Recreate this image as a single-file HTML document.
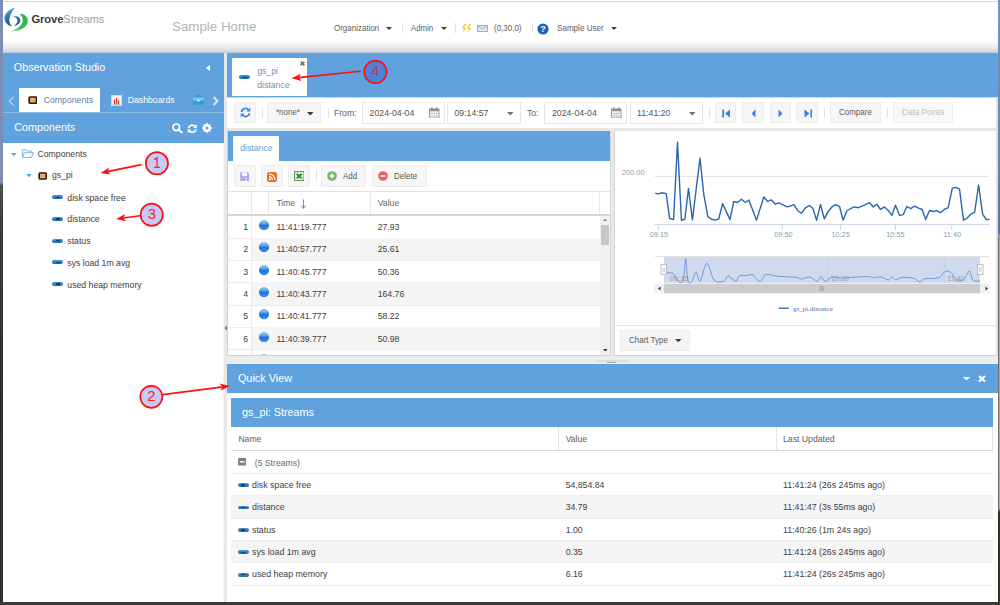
<!DOCTYPE html>
<html><head><meta charset="utf-8">
<style>
*{box-sizing:border-box;margin:0;padding:0}
html,body{width:1000px;height:605px;overflow:hidden;background:#2b2e28;font-family:"Liberation Sans",sans-serif}
.a{position:absolute}
.t{position:absolute;white-space:nowrap;line-height:1}
.blue{background:#5fa2dd}
</style></head><body>
<!-- edges -->
<div class="a" style="left:0;top:0;width:3px;height:605px;background:linear-gradient(#7c8eb6 0,#7c8eb6 182px,#4a4e44 186px,#3a3c35 230px,#2e302b 400px,#30322d 605px)"></div>
<div class="a" style="left:997.5px;top:0;width:2.5px;height:605px;background:linear-gradient(#7294be 0,#6a88b0 150px,#5a7296 232px,#a4a4a4 237px,#acacac 508px,#30322c 512px,#2e302b 605px)"></div><div class="a" style="left:997.5px;top:237px;width:1px;height:273px;background:#707070"></div>
<div class="a" style="left:0;top:602px;width:1000px;height:3px;background:#3a3b36"></div>
<div class="a" style="left:3px;top:0;width:995px;height:602px;background:#fff"></div>

<!-- ===== HEADER ===== -->
<div class="a" style="left:3px;top:0;width:995px;height:53px;background:linear-gradient(#fff 0,#fff 41px,#f0f1f4 45.5px,#dcdfe6 50px,#c4c8d5 53px)"></div>
<div class="a" style="left:3px;top:1px;width:995px;height:1px;background:#d6d6d6"></div>
<svg class="a" style="left:2px;top:5px" width="30" height="30" viewBox="0 0 30 30">
 <defs><linearGradient id="lgb" x1="0.3" y1="0" x2="0.6" y2="1"><stop offset="0" stop-color="#6aa8dc"/><stop offset="0.5" stop-color="#2e70b4"/><stop offset="1" stop-color="#1a5696"/></linearGradient>
 <linearGradient id="lgg" x1="0.8" y1="0.2" x2="0.1" y2="1"><stop offset="0" stop-color="#2fb84a"/><stop offset="0.6" stop-color="#3cbf55"/><stop offset="1" stop-color="#a8e0b0"/></linearGradient></defs>
 <path d="M12.9,2.7 C6,4.5 1.5,10 2.7,14.5 C3.5,18.5 6.5,20.8 9.9,21.3 C7.5,19 6.8,15.5 7.7,12.6 C8.5,9 10.5,5.5 12.9,2.7Z" fill="url(#lgb)"/>
 <path d="M11.2,11.6 C14,10.4 18.2,12 18.4,15 C18.6,18.2 15.6,20.4 12.2,20.9 C14.5,19 15.6,17 15.3,15.1 C15,13.2 13.5,12 11.2,11.6Z" fill="#2c6cb0"/>
 <path d="M17.4,8.7 C22.5,8.5 26.2,12 25.9,16.2 C25.5,21.5 19.5,26.3 7.9,26.6 C14,24.6 19.6,21 20.6,16.5 C21.2,13.5 19.8,10.6 17.4,8.7Z" fill="url(#lgg)"/>
</svg>
<div class="t" style="left:31.5px;top:14px;font-size:11.2px;color:#383838;font-weight:bold;letter-spacing:-0.1px">Grove<span style="font-weight:normal;color:#9c9c9c">Streams</span></div>
<div class="t" style="left:172px;top:20px;font-size:13.33px;color:#b3b3b3">Sample Home</div>
<div class="t" style="left:333.5px;top:24px;font-size:8.9px;transform:scaleX(0.9);transform-origin:0 0;color:#5e5e5e">Organization</div>
<svg class="a" style="left:385.0px;top:26.0px" width="8.00" height="5.00" viewBox="0 0 8.00 5.00"><path d="M1,1 H7.00 L4.00,4.00Z" fill="#3d3d3d"/></svg>
<div class="a" style="left:401.5px;top:23px;width:1px;height:10px;background:#e2e2e2"></div>
<div class="t" style="left:410.8px;top:24px;font-size:8.9px;transform:scaleX(0.88);transform-origin:0 0;color:#5e5e5e">Admin</div>
<svg class="a" style="left:439.5px;top:26.0px" width="8.00" height="5.00" viewBox="0 0 8.00 5.00"><path d="M1,1 H7.00 L4.00,4.00Z" fill="#3d3d3d"/></svg>
<div class="a" style="left:455px;top:23px;width:1px;height:10px;background:#e2e2e2"></div>
<svg class="a" style="left:461px;top:24px" width="11" height="9" viewBox="0 0 11 9"><path d="M3.5 0 L1 4.5 L3 4.5 L1.5 9 L5 4 L3 4 L5 0Z M8.5 0 L6 4.5 L8 4.5 L6.5 9 L10 4 L8 4 L10 0Z" fill="#f6c21c"/></svg>
<svg class="a" style="left:477px;top:25px" width="11" height="7" viewBox="0 0 11 7"><rect x="0.5" y="0.5" width="10" height="6" fill="#dfeaf7" stroke="#8fb1da"/><path d="M0.5 0.5 L5.5 4 L10.5 0.5" fill="none" stroke="#8fb1da"/></svg>
<div class="t" style="left:494px;top:24px;font-size:8.9px;transform:scaleX(0.9);transform-origin:0 0;color:#5e5e5e">(0,30,0)</div>
<div class="a" style="left:531.5px;top:23px;width:1px;height:10px;background:#e2e2e2"></div>
<svg class="a" style="left:537px;top:22.5px" width="12" height="12" viewBox="0 0 12 12"><circle cx="6" cy="6" r="5.6" fill="#1f5fc4"/><text x="6" y="9.3" font-size="9" font-weight="bold" text-anchor="middle" fill="#fff" font-family="Liberation Sans">?</text></svg>
<div class="t" style="left:557px;top:24px;font-size:8.9px;transform:scaleX(0.91);transform-origin:0 0;color:#5e5e5e">Sample User</div>
<svg class="a" style="left:610.0px;top:26.0px" width="8.00" height="5.00" viewBox="0 0 8.00 5.00"><path d="M1,1 H7.00 L4.00,4.00Z" fill="#3d3d3d"/></svg>

<!-- ===== LEFT PANEL ===== -->
<div class="a blue" style="left:3px;top:53px;width:220.5px;height:90px"></div>
<div class="t" style="left:13.8px;top:62px;font-size:10.76px;color:#fff">Observation Studio</div>
<div class="a" style="left:205.8px;top:64.5px;width:0;height:0;border-top:3.5px solid transparent;border-bottom:3.5px solid transparent;border-right:4px solid #fff"></div>
<svg class="a" style="left:8px;top:95.5px" width="7" height="10" viewBox="0 0 7 10"><path d="M5.5 0.8 L1.5 5 L5.5 9.2" fill="none" stroke="#a9cdef" stroke-width="1.6"/></svg>
<div class="a" style="left:18.8px;top:88px;width:81.7px;height:24.5px;background:#fff"></div>
<svg class="a" style="left:27.8px;top:96.0px" width="9.6" height="8.2" viewBox="0 0 9.6 8.2"><rect x="0.3" y="0.2" width="9.0" height="7.799999999999999" rx="1.7" fill="#1a1a1a"/><rect x="2.0" y="1.7" width="5.6" height="4.799999999999999" fill="#f7a94e"/><g fill="#fff" opacity="0.55"><rect x="0" y="2.46" width="0.8" height="0.6"/><rect x="0" y="5.08" width="0.8" height="0.6"/><rect x="8.799999999999999" y="2.46" width="0.8" height="0.6"/><rect x="8.799999999999999" y="5.08" width="0.8" height="0.6"/></g></svg>
<div class="t" style="left:43.7px;top:96px;font-size:8.71px;color:#5c83ad">Components</div>
<svg class="a" style="left:111px;top:94.8px" width="11.3" height="11" viewBox="0 0 11.3 11"><rect x="0.5" y="0.5" width="10.3" height="10" fill="#f4f4f4" stroke="#d8d8d8"/><rect x="3" y="4.5" width="1.2" height="4.5" fill="#e0322a"/><rect x="5" y="3" width="1.2" height="6" fill="#e0322a"/><rect x="7" y="5.5" width="1.2" height="3.5" fill="#e0322a"/><rect x="2" y="9" width="7.5" height="0.6" fill="#888"/></svg>
<div class="t" style="left:127.7px;top:96px;font-size:8.71px;color:#fff">Dashboards</div>
<svg class="a" style="left:193px;top:94.8px" width="11" height="10" viewBox="0 0 11 10"><path d="M3.5 2.5 V1 H7.5 V2.5" fill="none" stroke="#2b88c8" stroke-width="1"/><rect x="0.3" y="2.5" width="10.4" height="7.2" rx="1" fill="#2aa0dc"/><rect x="0.3" y="2.5" width="10.4" height="3" fill="#7cc8ee"/><rect x="4.5" y="4.8" width="2" height="1.6" fill="#fff"/></svg>
<svg class="a" style="left:212px;top:95.5px" width="7" height="10" viewBox="0 0 7 10"><path d="M1.6 0.9 L5.4 5 L1.6 9.1" fill="none" stroke="#d6e8fa" stroke-width="2"/></svg>
<div class="a" style="left:3px;top:112.3px;width:220.5px;height:1px;background:#8dbce6"></div>
<div class="t" style="left:14.3px;top:122px;font-size:10.76px;color:#fff">Components</div>
<svg class="a" style="left:171.5px;top:123.4px" width="11" height="10" viewBox="0 0 11 10"><circle cx="4.3" cy="4.3" r="3.3" fill="none" stroke="#fff" stroke-width="1.7"/><path d="M6.8 6.8 L9.8 9.5" stroke="#fff" stroke-width="2" stroke-linecap="round"/></svg>
<svg class="a" style="left:186.8px;top:123.8px" width="10.5" height="9.5" viewBox="0 0 10.5 9.5"><path d="M1.6 4.2 A3.7 3.7 0 0 1 8.2 2.6" fill="none" stroke="#fff" stroke-width="1.7"/><path d="M9.8 0.3 V4 H6.2Z" fill="#fff"/><path d="M8.9 5.3 A3.7 3.7 0 0 1 2.3 6.9" fill="none" stroke="#fff" stroke-width="1.7"/><path d="M0.7 9.2 V5.5 H4.3Z" fill="#fff"/></svg>
<svg class="a" style="left:201.6px;top:123.2px" width="10" height="10" viewBox="0 0 10 10"><g fill="#fff"><circle cx="5" cy="5" r="3.7"/><rect x="4.1" y="0.2" width="1.8" height="2.2" transform="rotate(0 5 5)"/><rect x="4.1" y="0.2" width="1.8" height="2.2" transform="rotate(45 5 5)"/><rect x="4.1" y="0.2" width="1.8" height="2.2" transform="rotate(90 5 5)"/><rect x="4.1" y="0.2" width="1.8" height="2.2" transform="rotate(135 5 5)"/><rect x="4.1" y="0.2" width="1.8" height="2.2" transform="rotate(180 5 5)"/><rect x="4.1" y="0.2" width="1.8" height="2.2" transform="rotate(225 5 5)"/><rect x="4.1" y="0.2" width="1.8" height="2.2" transform="rotate(270 5 5)"/><rect x="4.1" y="0.2" width="1.8" height="2.2" transform="rotate(315 5 5)"/></g><circle cx="5" cy="5" r="1.5" fill="#5fa2dd"/></svg>

<!-- tree -->
<svg class="a" style="left:10.0px;top:151.7px" width="7.60" height="5.20" viewBox="0 0 7.60 5.20"><path d="M1,1 H6.60 L3.80,4.20Z" fill="#5fa2dd"/></svg>
<svg class="a" style="left:22px;top:149.3px" width="12" height="9" viewBox="0 0 12 9"><path d="M0.6 8.4 V0.8 H4 L5 2 H9.5 V3.5 M0.6 8.4 L2.5 3.6 H11.4 L9.5 8.4 Z" fill="none" stroke="#7fb6e6" stroke-width="1"/></svg>
<div class="t" style="left:37.5px;top:150px;font-size:8.7px;color:#404040">Components</div>
<svg class="a" style="left:24.8px;top:173.4px" width="7.80" height="5.20" viewBox="0 0 7.80 5.20"><path d="M1,1 H6.80 L3.90,4.20Z" fill="#5fa2dd"/></svg>
<svg class="a" style="left:38.0px;top:171.7px" width="9.4" height="8.0" viewBox="0 0 9.4 8.0"><rect x="0.3" y="0.2" width="8.8" height="7.6" rx="1.7" fill="#1a1a1a"/><rect x="2.0" y="1.7" width="5.4" height="4.6" fill="#f7a94e"/><g fill="#fff" opacity="0.55"><rect x="0" y="2.40" width="0.8" height="0.6"/><rect x="0" y="4.96" width="0.8" height="0.6"/><rect x="8.6" y="2.40" width="0.8" height="0.6"/><rect x="8.6" y="4.96" width="0.8" height="0.6"/></g></svg>
<div class="t" style="left:52px;top:171px;font-size:8.7px;color:#404040">gs_pi</div>
<div class="a" style="left:52px;top:195.3px;width:11px;height:4px;border-radius:2px;background:linear-gradient(#4a95d3,#1f6aa8)"></div><div class="a" style="left:55.5px;top:196.5px;width:4px;height:1.6px;background:#123d63"></div>
<div class="t" style="left:67.3px;top:194px;font-size:8.7px;color:#404040">disk space free</div>
<div class="a" style="left:52px;top:217.0px;width:11px;height:4px;border-radius:2px;background:linear-gradient(#4a95d3,#1f6aa8)"></div><div class="a" style="left:55.5px;top:218.2px;width:4px;height:1.6px;background:#123d63"></div>
<div class="t" style="left:67.3px;top:215px;font-size:8.7px;color:#404040">distance</div>
<div class="a" style="left:52px;top:238.7px;width:11px;height:4px;border-radius:2px;background:linear-gradient(#4a95d3,#1f6aa8)"></div><div class="a" style="left:55.5px;top:239.9px;width:4px;height:1.6px;background:#123d63"></div>
<div class="t" style="left:67.3px;top:237px;font-size:8.7px;color:#404040">status</div>
<div class="a" style="left:52px;top:260.4px;width:11px;height:4px;border-radius:2px;background:linear-gradient(#4a95d3,#1f6aa8)"></div><div class="a" style="left:55.5px;top:261.6px;width:4px;height:1.6px;background:#123d63"></div>
<div class="t" style="left:67.3px;top:259px;font-size:8.7px;color:#404040">sys load 1m avg</div>
<div class="a" style="left:52px;top:282.1px;width:11px;height:4px;border-radius:2px;background:linear-gradient(#4a95d3,#1f6aa8)"></div><div class="a" style="left:55.5px;top:283.3px;width:4px;height:1.6px;background:#123d63"></div>
<div class="t" style="left:67.3px;top:281px;font-size:8.7px;color:#404040">used heap memory</div>
<!-- ===== MAIN ===== -->
<div class="a" style="left:224px;top:53px;width:3px;height:549px;background:#e8e8e8"></div><div class="a" style="left:223px;top:143px;width:1px;height:459px;background:#f2f2f2"></div>
<div class="a blue" style="left:227px;top:53px;width:771px;height:43.5px"></div>
<div class="a" style="left:231.6px;top:57.8px;width:75.4px;height:38.7px;background:#fff"></div>
<svg class="a" style="left:299.5px;top:61.2px" width="5" height="5" viewBox="0 0 5 5"><path d="M0.6 0.6 L4.4 4.4 M4.4 0.6 L0.6 4.4" stroke="#707070" stroke-width="1.5"/></svg>
<div class="a" style="left:239.2px;top:75.3px;width:10.7px;height:3.8px;border-radius:2px;background:linear-gradient(#4a95d3,#1f6aa8)"></div><div class="a" style="left:242.5px;top:76.5px;width:4px;height:1.5px;background:#15416a"></div>
<div class="t" style="left:257.2px;top:67px;font-size:8.7px;color:#6a93c2;">gs_pi</div>
<div class="t" style="left:257.2px;top:81px;font-size:8.7px;color:#6a93c2;">distance</div>
<div class="a" style="left:227px;top:96.5px;width:771px;height:1px;background:#d9d9d9"></div>
<div class="a" style="left:227px;top:97.5px;width:768.5px;height:30px;background:#fff"></div>
<div class="a" style="left:995.5px;top:97.5px;width:2.5px;height:30px;background:#e4e4e4"></div>
<div class="a" style="left:234.4px;top:102px;width:21.299999999999983px;height:21px;background:#f6f6f6;border:1px solid #eeeeee"></div>
<svg class="a" style="left:239.5px;top:107px" width="11" height="11" viewBox="0 0 11 11"><path d="M1.5 5 A4 4 0 0 1 8.6 3" fill="none" stroke="#3d8de0" stroke-width="1.8"/><path d="M10.3 0.6 V4.6 H6.3Z" fill="#3d8de0"/><path d="M9.5 6 A4 4 0 0 1 2.4 8" fill="none" stroke="#3d8de0" stroke-width="1.8"/><path d="M0.7 10.4 V6.4 H4.7Z" fill="#3d8de0"/></svg>
<div class="a" style="left:261.6px;top:108px;width:1px;height:10px;background:#e0e0e0"></div>
<div class="a" style="left:267.4px;top:102px;width:53.60000000000002px;height:21px;background:#f6f6f6;border:1px solid #eeeeee"></div>
<div class="t" style="left:276px;top:108px;font-size:8.9px;transform:scaleX(0.9);transform-origin:0 0;color:#606060">*none*</div>
<svg class="a" style="left:306.0px;top:110.5px" width="8.60" height="5.50" viewBox="0 0 8.60 5.50"><path d="M1,1 H7.60 L4.30,4.50Z" fill="#3a3a3a"/></svg>
<div class="a" style="left:327.6px;top:108px;width:1px;height:10px;background:#e0e0e0"></div>
<div class="t" style="left:334px;top:109px;font-size:8.6px;color:#606060;">From:</div>
<div class="a" style="left:362.4px;top:101.6px;width:82.60000000000002px;height:22px;background:#fff;border:1px solid #e6e6e6"></div>
<div class="t" style="left:369.6px;top:109px;font-size:8.76px;color:#555;">2024-04-04</div>
<svg class="a" style="left:429px;top:106.5px" width="10.5" height="11.5" viewBox="0 0 10.5 11.5"><rect x="0.5" y="2" width="9.5" height="9" fill="none" stroke="#9a9a9a" stroke-width="1"/><rect x="0.5" y="2" width="9.5" height="2.2" fill="#8e8e8e"/><path d="M0.5 6.5 H10 M0.5 9 H10 M2.9 4 V11 M5.25 4 V11 M7.6 4 V11" stroke="#bdbdbd" stroke-width="0.7"/><rect x="2.2" y="0.3" width="1.4" height="2.5" fill="#8e8e8e"/><rect x="6.9" y="0.3" width="1.4" height="2.5" fill="#8e8e8e"/></svg>
<div class="a" style="left:447.4px;top:101.6px;width:73.60000000000002px;height:22px;background:#fff;border:1px solid #e6e6e6"></div>
<div class="t" style="left:454.4px;top:109px;font-size:8.76px;color:#555;">09:14:57</div>
<svg class="a" style="left:506.0px;top:110.8px" width="8.60" height="5.50" viewBox="0 0 8.60 5.50"><path d="M1,1 H7.60 L4.30,4.50Z" fill="#707070"/></svg>
<div class="t" style="left:527px;top:109px;font-size:8.6px;color:#606060;">To:</div>
<div class="a" style="left:544.4px;top:101.6px;width:83.0px;height:22px;background:#fff;border:1px solid #e6e6e6"></div>
<div class="t" style="left:552px;top:109px;font-size:8.76px;color:#555;">2024-04-04</div>
<svg class="a" style="left:611px;top:106.5px" width="10.5" height="11.5" viewBox="0 0 10.5 11.5"><rect x="0.5" y="2" width="9.5" height="9" fill="none" stroke="#9a9a9a" stroke-width="1"/><rect x="0.5" y="2" width="9.5" height="2.2" fill="#8e8e8e"/><path d="M0.5 6.5 H10 M0.5 9 H10 M2.9 4 V11 M5.25 4 V11 M7.6 4 V11" stroke="#bdbdbd" stroke-width="0.7"/><rect x="2.2" y="0.3" width="1.4" height="2.5" fill="#8e8e8e"/><rect x="6.9" y="0.3" width="1.4" height="2.5" fill="#8e8e8e"/></svg>
<div class="a" style="left:629.6px;top:101.6px;width:73.79999999999995px;height:22px;background:#fff;border:1px solid #e6e6e6"></div>
<div class="t" style="left:637px;top:109px;font-size:8.76px;color:#555;">11:41:20</div>
<svg class="a" style="left:688.0px;top:110.8px" width="8.60" height="5.50" viewBox="0 0 8.60 5.50"><path d="M1,1 H7.60 L4.30,4.50Z" fill="#707070"/></svg>
<div class="a" style="left:709.4px;top:108px;width:1px;height:10px;background:#e0e0e0"></div>
<div class="a" style="left:715px;top:102px;width:21.399999999999977px;height:21px;background:#f6f6f6;border:1px solid #eeeeee"></div>
<div class="a" style="left:742.4px;top:102px;width:21.399999999999977px;height:21px;background:#f6f6f6;border:1px solid #eeeeee"></div>
<div class="a" style="left:769.6px;top:102px;width:21.399999999999977px;height:21px;background:#f6f6f6;border:1px solid #eeeeee"></div>
<div class="a" style="left:796.4px;top:102px;width:21.399999999999977px;height:21px;background:#f6f6f6;border:1px solid #eeeeee"></div>
<svg class="a" style="left:722px;top:108.5px" width="8.5" height="9" viewBox="0 0 8.5 9"><rect x="0.3" y="0.5" width="1.8" height="8" fill="#3d7fe0"/><path d="M8 0.5 V8.5 L3 4.5Z" fill="#3d7fe0"/></svg>
<svg class="a" style="left:750.5px;top:108.5px" width="5" height="9" viewBox="0 0 5 9"><path d="M4.5 0.5 V8.5 L0.5 4.5Z" fill="#3d7fe0"/></svg>
<svg class="a" style="left:777.5px;top:108.5px" width="5" height="9" viewBox="0 0 5 9"><path d="M0.5 0.5 V8.5 L4.5 4.5Z" fill="#3d7fe0"/></svg>
<svg class="a" style="left:803.5px;top:108.5px" width="8.5" height="9" viewBox="0 0 8.5 9"><path d="M0.5 0.5 V8.5 L5.5 4.5Z" fill="#3d7fe0"/><rect x="6.4" y="0.5" width="1.8" height="8" fill="#3d7fe0"/></svg>
<div class="a" style="left:824.4px;top:108px;width:1px;height:10px;background:#e0e0e0"></div>
<div class="a" style="left:830px;top:102px;width:51px;height:21px;background:#f6f6f6;border:1px solid #eeeeee"></div>
<div class="t" style="left:839px;top:108px;font-size:8.9px;transform:scaleX(0.9);transform-origin:0 0;color:#5a5a5a">Compare</div>
<div class="a" style="left:887.4px;top:108px;width:1px;height:10px;background:#e0e0e0"></div>
<div class="a" style="left:893px;top:102px;width:60px;height:21px;background:#f8f8f8;border:1px solid #f0f0f0"></div>
<div class="t" style="left:901.6px;top:108px;font-size:8.9px;transform:scaleX(0.92);transform-origin:0 0;color:#bdbdbd">Data Points</div>
<div class="a" style="left:227px;top:127.5px;width:771px;height:3.5px;background:#e6e6e6"></div>
<!-- ===== GRID PANEL ===== -->
<div class="a" style="left:227px;top:131px;width:384px;height:225.00px;background:#fff;"></div>
<div class="a" style="left:227px;top:131px;width:1px;height:225.00px;background:#d0d0d0;"></div>
<div class="a" style="left:228px;top:131px;width:382.70px;height:29.80px;background:#5fa2dd;"></div>
<div class="a" style="left:233px;top:136px;width:46.40px;height:24.80px;background:#fff;"></div>
<div class="t" style="left:240.2px;top:144px;font-size:8.7px;color:#6a9acb;">distance</div>
<div class="a" style="left:234px;top:165.3px;width:21.80px;height:21.60px;background:#f6f6f6;border:1px solid #eeeeee"></div>
<svg class="a" style="left:240.3px;top:171.6px" width="9.3" height="9.4" viewBox="0 0 9.3 9.4"><path d="M0.3 0.3 H7.8 L9 1.5 V9.1 H0.3Z" fill="#a4a4ec"/><rect x="2" y="0.6" width="5.2" height="3.6" fill="#fdfdff"/><rect x="2.3" y="5.6" width="4.6" height="3.5" fill="#d6d6f2"/><rect x="3.2" y="6.4" width="1.5" height="2" fill="#6a6a9a"/></svg>
<div class="a" style="left:261.3px;top:165.3px;width:21.40px;height:21.60px;background:#f6f6f6;border:1px solid #eeeeee"></div>
<svg class="a" style="left:267px;top:171.5px" width="10" height="10" viewBox="0 0 10 10"><rect x="0" y="0" width="10" height="10" rx="1.8" fill="#e8742a"/><circle cx="2.8" cy="7.2" r="1" fill="#fff"/><path d="M2 4.6 A3.4 3.4 0 0 1 5.4 8 M2 2 A6 6 0 0 1 8 8" fill="none" stroke="#fff" stroke-width="1.2"/></svg>
<div class="a" style="left:288.2px;top:165.3px;width:21.40px;height:21.60px;background:#f6f6f6;border:1px solid #eeeeee"></div>
<svg class="a" style="left:293.6px;top:171.3px" width="10.4" height="10" viewBox="0 0 10.4 10"><rect x="0.4" y="0.4" width="9.6" height="9.2" fill="#d9ecd2" stroke="#4d8f4d" stroke-width="0.9"/><path d="M2.8 2.8 L7.6 7.4 M7.6 2.8 L2.8 7.4" stroke="#2a8a3a" stroke-width="1.8"/></svg>
<div class="a" style="left:315.7px;top:170px;width:1.00px;height:11.00px;background:#e0e0e0;"></div>
<div class="a" style="left:321.2px;top:165.3px;width:44.90px;height:21.60px;background:#f6f6f6;border:1px solid #eeeeee"></div>
<svg class="a" style="left:327.2px;top:171.2px" width="10" height="10" viewBox="0 0 10 10"><circle cx="5" cy="5" r="4.8" fill="#6dbb5c"/><rect x="4.2" y="2.6" width="1.6" height="4.8" fill="#fff"/><rect x="2.6" y="4.2" width="4.8" height="1.6" fill="#fff"/></svg>
<div class="t" style="left:343.2px;top:172px;font-size:8.9px;transform:scaleX(0.89);transform-origin:0 0;color:#5a5a5a">Add</div>
<div class="a" style="left:372.4px;top:165.3px;width:54.20px;height:21.60px;background:#f6f6f6;border:1px solid #eeeeee"></div>
<svg class="a" style="left:378.3px;top:171.2px" width="10" height="10" viewBox="0 0 10 10"><circle cx="5" cy="5" r="4.8" fill="#e66262"/><rect x="2.6" y="4.2" width="4.8" height="1.6" fill="#fff"/></svg>
<div class="t" style="left:394px;top:172px;font-size:8.9px;transform:scaleX(0.9);transform-origin:0 0;color:#5a5a5a">Delete</div>
<div class="a" style="left:228px;top:191px;width:382.3px;height:1px;background:#e4e4e4;"></div>
<div class="a" style="left:228px;top:213.6px;width:382.3px;height:2px;background:#d6d6d6;"></div>
<div class="a" style="left:251.3px;top:192px;width:1.00px;height:21.80px;background:#e8e8e8;"></div>
<div class="a" style="left:268.2px;top:192px;width:1.00px;height:21.80px;background:#e8e8e8;"></div>
<div class="a" style="left:370.3px;top:192px;width:1.00px;height:21.80px;background:#e8e8e8;"></div>
<div class="a" style="left:599.4px;top:192px;width:1.00px;height:21.80px;background:#e8e8e8;"></div>
<div class="t" style="left:276.4px;top:199px;font-size:8.5px;color:#666;">Time</div>
<svg class="a" style="left:300.8px;top:198.8px" width="5" height="10" viewBox="0 0 5 10"><path d="M2.5 0.5 V9" stroke="#888" stroke-width="1"/><path d="M0.5 6.5 L2.5 9.5 L4.5 6.5" fill="none" stroke="#888" stroke-width="1"/></svg>
<div class="t" style="left:377.7px;top:199px;font-size:8.7px;color:#666;">Value</div>
<div class="a" style="left:228px;top:237.82px;width:372.2px;height:1px;background:#ececec;"></div>
<div class="a" style="left:251.3px;top:215.5px;width:1.00px;height:22.32px;background:#ededed;"></div>
<svg class="a" style="left:259.2px;top:219.90px" width="10" height="10.5" viewBox="0 0 10 10.5"><defs><linearGradient id="gb0" x1="0" y1="0" x2="0" y2="1"><stop offset="0" stop-color="#a8d8ff"/><stop offset="0.3" stop-color="#5aa8f0"/><stop offset="0.55" stop-color="#1f70d4"/><stop offset="1" stop-color="#3f9cf0"/></linearGradient></defs><circle cx="5" cy="5.25" r="4.9" fill="url(#gb0)"/><circle cx="5" cy="5.25" r="4.6" fill="none" stroke="#1a5fb8" stroke-width="0.5" opacity="0.6"/></svg>
<div class="t" style="left:243.2px;top:223px;font-size:8.7px;color:#404040;">1</div>
<div class="t" style="left:276.4px;top:223px;font-size:8.7px;color:#404040;">11:41:19.777</div>
<div class="t" style="left:377.7px;top:223px;font-size:8.7px;color:#404040;">27.93</div>
<div class="a" style="left:251.5px;top:237.82px;width:348.70px;height:22.32px;background:#f5f5f5;"></div>
<div class="a" style="left:228px;top:260.14px;width:372.2px;height:1px;background:#ececec;"></div>
<div class="a" style="left:251.3px;top:237.82px;width:1.00px;height:22.32px;background:#ededed;"></div>
<svg class="a" style="left:259.2px;top:242.22px" width="10" height="10.5" viewBox="0 0 10 10.5"><defs><linearGradient id="gb1" x1="0" y1="0" x2="0" y2="1"><stop offset="0" stop-color="#a8d8ff"/><stop offset="0.3" stop-color="#5aa8f0"/><stop offset="0.55" stop-color="#1f70d4"/><stop offset="1" stop-color="#3f9cf0"/></linearGradient></defs><circle cx="5" cy="5.25" r="4.9" fill="url(#gb1)"/><circle cx="5" cy="5.25" r="4.6" fill="none" stroke="#1a5fb8" stroke-width="0.5" opacity="0.6"/></svg>
<div class="t" style="left:243.2px;top:245px;font-size:8.7px;color:#404040;">2</div>
<div class="t" style="left:276.4px;top:245px;font-size:8.7px;color:#404040;">11:40:57.777</div>
<div class="t" style="left:377.7px;top:245px;font-size:8.7px;color:#404040;">25.61</div>
<div class="a" style="left:228px;top:282.46px;width:372.2px;height:1px;background:#ececec;"></div>
<div class="a" style="left:251.3px;top:260.14px;width:1.00px;height:22.32px;background:#ededed;"></div>
<svg class="a" style="left:259.2px;top:264.54px" width="10" height="10.5" viewBox="0 0 10 10.5"><defs><linearGradient id="gb2" x1="0" y1="0" x2="0" y2="1"><stop offset="0" stop-color="#a8d8ff"/><stop offset="0.3" stop-color="#5aa8f0"/><stop offset="0.55" stop-color="#1f70d4"/><stop offset="1" stop-color="#3f9cf0"/></linearGradient></defs><circle cx="5" cy="5.25" r="4.9" fill="url(#gb2)"/><circle cx="5" cy="5.25" r="4.6" fill="none" stroke="#1a5fb8" stroke-width="0.5" opacity="0.6"/></svg>
<div class="t" style="left:243.2px;top:268px;font-size:8.7px;color:#404040;">3</div>
<div class="t" style="left:276.4px;top:268px;font-size:8.7px;color:#404040;">11:40:45.777</div>
<div class="t" style="left:377.7px;top:268px;font-size:8.7px;color:#404040;">50.36</div>
<div class="a" style="left:251.5px;top:282.46000000000004px;width:348.70px;height:22.32px;background:#f5f5f5;"></div>
<div class="a" style="left:228px;top:304.78px;width:372.2px;height:1px;background:#ececec;"></div>
<div class="a" style="left:251.3px;top:282.46000000000004px;width:1.00px;height:22.32px;background:#ededed;"></div>
<svg class="a" style="left:259.2px;top:286.86px" width="10" height="10.5" viewBox="0 0 10 10.5"><defs><linearGradient id="gb3" x1="0" y1="0" x2="0" y2="1"><stop offset="0" stop-color="#a8d8ff"/><stop offset="0.3" stop-color="#5aa8f0"/><stop offset="0.55" stop-color="#1f70d4"/><stop offset="1" stop-color="#3f9cf0"/></linearGradient></defs><circle cx="5" cy="5.25" r="4.9" fill="url(#gb3)"/><circle cx="5" cy="5.25" r="4.6" fill="none" stroke="#1a5fb8" stroke-width="0.5" opacity="0.6"/></svg>
<div class="t" style="left:243.2px;top:290px;font-size:8.7px;color:#404040;">4</div>
<div class="t" style="left:276.4px;top:290px;font-size:8.7px;color:#404040;">11:40:43.777</div>
<div class="t" style="left:377.7px;top:290px;font-size:8.7px;color:#404040;">164.76</div>
<div class="a" style="left:228px;top:327.10px;width:372.2px;height:1px;background:#ececec;"></div>
<div class="a" style="left:251.3px;top:304.78px;width:1.00px;height:22.32px;background:#ededed;"></div>
<svg class="a" style="left:259.2px;top:309.18px" width="10" height="10.5" viewBox="0 0 10 10.5"><defs><linearGradient id="gb4" x1="0" y1="0" x2="0" y2="1"><stop offset="0" stop-color="#a8d8ff"/><stop offset="0.3" stop-color="#5aa8f0"/><stop offset="0.55" stop-color="#1f70d4"/><stop offset="1" stop-color="#3f9cf0"/></linearGradient></defs><circle cx="5" cy="5.25" r="4.9" fill="url(#gb4)"/><circle cx="5" cy="5.25" r="4.6" fill="none" stroke="#1a5fb8" stroke-width="0.5" opacity="0.6"/></svg>
<div class="t" style="left:243.2px;top:312px;font-size:8.7px;color:#404040;">5</div>
<div class="t" style="left:276.4px;top:312px;font-size:8.7px;color:#404040;">11:40:41.777</div>
<div class="t" style="left:377.7px;top:312px;font-size:8.7px;color:#404040;">58.22</div>
<div class="a" style="left:251.5px;top:327.1px;width:348.70px;height:22.32px;background:#f5f5f5;"></div>
<div class="a" style="left:228px;top:349.42px;width:372.2px;height:1px;background:#ececec;"></div>
<div class="a" style="left:251.3px;top:327.1px;width:1.00px;height:22.32px;background:#ededed;"></div>
<svg class="a" style="left:259.2px;top:331.50px" width="10" height="10.5" viewBox="0 0 10 10.5"><defs><linearGradient id="gb5" x1="0" y1="0" x2="0" y2="1"><stop offset="0" stop-color="#a8d8ff"/><stop offset="0.3" stop-color="#5aa8f0"/><stop offset="0.55" stop-color="#1f70d4"/><stop offset="1" stop-color="#3f9cf0"/></linearGradient></defs><circle cx="5" cy="5.25" r="4.9" fill="url(#gb5)"/><circle cx="5" cy="5.25" r="4.6" fill="none" stroke="#1a5fb8" stroke-width="0.5" opacity="0.6"/></svg>
<div class="t" style="left:243.2px;top:335px;font-size:8.7px;color:#404040;">6</div>
<div class="t" style="left:276.4px;top:335px;font-size:8.7px;color:#404040;">11:40:39.777</div>
<div class="t" style="left:377.7px;top:335px;font-size:8.7px;color:#404040;">50.98</div>
<div class="a" style="left:251.3px;top:349.42px;width:1.00px;height:6.08px;background:#ededed;"></div>
<svg class="a" style="left:259.2px;top:353.82px" width="10" height="10.5" viewBox="0 0 10 10.5"><defs><linearGradient id="gb6" x1="0" y1="0" x2="0" y2="1"><stop offset="0" stop-color="#a8d8ff"/><stop offset="0.3" stop-color="#5aa8f0"/><stop offset="0.55" stop-color="#1f70d4"/><stop offset="1" stop-color="#3f9cf0"/></linearGradient></defs><circle cx="5" cy="5.25" r="4.9" fill="url(#gb6)"/><circle cx="5" cy="5.25" r="4.6" fill="none" stroke="#1a5fb8" stroke-width="0.5" opacity="0.6"/></svg>
<div class="a" style="left:600.2px;top:215.5px;width:10.10px;height:140.00px;background:#f0f0f0;"></div>
<div class="a" style="left:601.4px;top:224.9px;width:7.40px;height:20.20px;background:#c6c6c6;"></div>
<div class="a" style="left:602.8px;top:218.9px;width:0;height:0;border-left:2.3px solid transparent;border-right:2.3px solid transparent;border-bottom:2.8px solid #777"></div>
<svg class="a" style="left:601.8px;top:347.6px" width="6.60" height="4.40" viewBox="0 0 6.60 4.40"><path d="M1,1 H5.60 L3.30,3.40Z" fill="#333"/></svg>
<div class="a" style="left:610.3px;top:131px;width:1.00px;height:225.00px;background:#d8d8d8;"></div>
<div class="a" style="left:227px;top:355.3px;width:771px;height:1.00px;background:#d0d0d0;"></div>
<div class="a" style="left:227px;top:356.3px;width:771px;height:7.40px;background:#ececec;"></div>
<div class="a" style="left:597px;top:360px;width:32.00px;height:2.20px;background:#dcdcdc;"></div>
<div class="a" style="left:607px;top:361.5px;width:8.50px;height:1.70px;background:#a8a8a8;"></div>
<!-- ===== CHART PANEL ===== -->
<div class="a" style="left:611.3px;top:131px;width:3.00px;height:225.00px;background:#e8e8e8;"></div>
<div class="a" style="left:614.3px;top:131px;width:0.80px;height:225.00px;background:#d4d4d4;"></div>
<div class="a" style="left:615.1px;top:131px;width:380.70px;height:224.30px;background:#fff;"></div>
<div class="a" style="left:995.8px;top:97px;width:2.20px;height:259.00px;background:#e0e0e0;"></div>
<svg class="a" style="left:614px;top:131px" width="382" height="225" viewBox="0 0 382 225">
<line x1="40.6" y1="45.4" x2="375.5" y2="45.4" stroke="#e0e2e6" stroke-width="1"/>
<line x1="40.6" y1="93.4" x2="375.5" y2="93.4" stroke="#c8d4e8" stroke-width="1"/>
<g stroke="#c8d4e8" stroke-width="1"><line x1="44.3" y1="93.4" x2="44.3" y2="98.9"/><line x1="168.2" y1="93.4" x2="168.2" y2="98.9"/><line x1="226.4" y1="93.4" x2="226.4" y2="98.9"/><line x1="281.5" y1="93.4" x2="281.5" y2="98.9"/><line x1="337.7" y1="93.4" x2="337.7" y2="98.9"/></g>
<polyline points="41.2,62.1 43.9,62.9 47.8,61.8 52.2,62.6 55.6,87.3 59.6,88.5 63.5,11.1 67.4,89.3 70.9,88.0 74.5,57.4 78.4,88.8 86.0,27.2 89.8,63.7 93.8,85.7 97.3,88.0 100.9,89.1 104.7,88.0 108.6,72.6 116.0,88.6 119.7,70.5 123.4,71.5 127.4,68.3 131.3,71.5 134.8,69.0 142.5,89.1 149.8,66.0 153.8,70.5 157.1,68.8 161.5,73.2 165.0,71.9 172.5,75.7 176.0,75.2 179.9,73.7 183.8,79.7 187.4,82.3 191.0,77.2 195.4,74.5 198.9,77.5 202.6,89.4 206.5,73.5 210.3,87.8 214.7,79.7 218.2,75.7 221.7,73.7 225.6,75.7 229.1,89.1 233.1,79.5 240.0,75.9 244.5,76.7 250.4,74.2 255.4,71.7 259.3,75.9 262.9,73.2 266.5,78.5 270.4,75.9 273.9,79.2 277.8,84.4 281.5,74.2 285.6,84.4 289.2,83.6 292.9,75.5 296.7,77.7 300.6,75.2 304.6,77.2 308.1,78.5 311.7,88.6 315.5,79.5 319.5,80.5 322.4,79.7 326.5,81.7 330.2,78.5 334.2,76.7 338.3,57.1 341.9,56.4 345.5,58.2 349.5,89.1 352.8,87.3 357.0,83.1 360.6,81.3 364.6,54.0 368.6,83.1 372.3,88.5 375.5,88.5" fill="none" stroke="#2a66b0" stroke-width="1.4" stroke-linejoin="round"/>
<rect x="50" y="125.6" width="315.9" height="26.8" fill="#d0daee"/>
<line x1="41" y1="125.6" x2="376" y2="125.6" stroke="#e0e0e0" stroke-width="1"/>
<line x1="214.1" y1="125.6" x2="214.1" y2="152.4" stroke="#bcc8dc" stroke-width="0.6"/>
<line x1="330.2" y1="125.6" x2="330.2" y2="152.4" stroke="#bcc8dc" stroke-width="0.6"/>
<text x="56" y="150.3" font-family="Liberation Sans" font-size="7.3" fill="#a0a0a0">09:15</text>
<text x="216.8" y="150.3" font-family="Liberation Sans" font-size="7.3" fill="#a0a0a0">10:20</text>
<text x="332.9" y="150.3" font-family="Liberation Sans" font-size="7.3" fill="#a0a0a0">11:40</text>
<path d="M50.0,142.0 C51.5,142.1 56.8,141.2 59.0,142.4 C61.2,143.6 61.3,147.7 63.0,149.0 C64.7,150.3 67.6,153.6 69.0,150.0 C70.4,146.4 70.8,127.6 71.6,127.6 C72.4,127.6 72.9,146.2 74.0,150.0 C75.1,153.8 76.7,151.9 78.0,150.4 C79.3,148.9 80.7,141.1 82.0,141.0 C83.3,140.9 84.2,151.4 86.0,150.0 C87.8,148.6 90.7,132.6 93.0,132.4 C95.3,132.2 97.2,146.0 100.0,149.0 C102.8,152.0 107.7,151.1 110.0,150.4 C112.3,149.7 112.0,145.0 114.0,145.0 C116.0,145.0 120.2,150.4 122.0,150.4 C123.8,150.4 123.2,146.0 125.0,145.0 C126.8,144.0 130.7,144.6 133.0,144.4 C135.3,144.2 136.8,143.0 139.0,144.0 C141.2,145.0 143.8,150.5 146.0,150.4 C148.2,150.3 149.3,144.5 152.0,143.6 C154.7,142.7 159.0,144.7 162.0,145.0 C165.0,145.3 166.7,145.4 170.0,145.6 C173.3,145.8 179.0,146.0 182.0,146.4 C185.0,146.8 185.7,148.1 188.0,148.0 C190.3,147.9 193.5,145.6 196.0,146.0 C198.5,146.4 201.2,150.5 203.0,150.4 C204.8,150.3 205.7,145.6 207.0,145.6 C208.3,145.6 209.2,150.3 211.0,150.4 C212.8,150.5 215.5,146.6 218.0,146.0 C220.5,145.4 223.5,146.9 226.0,147.0 C228.5,147.1 228.5,147.1 233.0,146.8 C237.5,146.6 248.3,145.5 252.8,145.5 C257.3,145.5 257.6,146.7 260.0,146.8 C262.4,146.9 264.8,145.6 267.2,146.0 C269.6,146.4 272.6,149.1 274.4,149.1 C276.2,149.1 276.8,146.1 278.0,146.0 C279.2,145.9 279.8,148.5 281.6,148.6 C283.4,148.7 285.8,146.6 288.8,146.4 C291.8,146.2 296.8,146.6 299.6,147.3 C302.5,148.1 304.1,150.8 305.9,150.9 C307.7,151.0 307.2,148.5 310.4,147.8 C313.5,147.1 321.5,147.9 324.8,146.8 C328.1,145.7 328.4,142.0 330.2,141.0 C332.0,140.0 334.0,139.9 335.6,140.6 C337.2,141.4 338.9,143.9 340.1,145.5 C341.3,147.1 341.1,149.6 342.8,150.0 C344.4,150.4 347.9,149.8 350.0,148.2 C352.1,146.5 353.9,140.0 355.4,140.1 C356.9,140.3 357.2,147.5 359.0,149.1 C360.8,150.8 364.8,149.8 365.9,150.0" fill="none" stroke="#6b8fd6" stroke-width="0.9"/>
<rect x="47" y="133.6" width="5.4" height="10" fill="#fff" stroke="#a8a8a8" stroke-width="0.7"/>
<line x1="49" y1="136.5" x2="49" y2="141" stroke="#999" stroke-width="0.5"/><line x1="50.4" y1="136.5" x2="50.4" y2="141" stroke="#999" stroke-width="0.5"/>
<rect x="363.5" y="133.4" width="5.5" height="10.3" fill="#fff" stroke="#a8a8a8" stroke-width="0.7"/>
<line x1="365.5" y1="136.5" x2="365.5" y2="141" stroke="#999" stroke-width="0.5"/><line x1="367" y1="136.5" x2="367" y2="141" stroke="#999" stroke-width="0.5"/>
<rect x="40" y="152.8" width="336" height="9.5" fill="#f0f0f0"/>
<rect x="50" y="153" width="316" height="9.2" fill="#cccccc"/>
<path d="M44 157.5 L46.5 155.5 V159.5Z" fill="#333"/>
<path d="M374 157.5 L371.5 155.5 V159.5Z" fill="#333"/>
<g stroke="#888" stroke-width="0.6"><line x1="206" y1="155" x2="206" y2="160"/><line x1="207.6" y1="155" x2="207.6" y2="160"/><line x1="209.2" y1="155" x2="209.2" y2="160"/></g>
<line x1="164.7" y1="177.2" x2="174.8" y2="177.2" stroke="#2f6ab4" stroke-width="1.4"/>
<text x="178.9" y="179.8" font-family="Liberation Serif" font-size="7" fill="#4a6eae">gs_pi.distance</text>
</svg>
<div class="t" style="left:621.9px;top:169px;font-size:7.4px;color:#8b9cb2;">200.00</div>
<div class="t" style="left:628.9px;width:60px;text-align:center;top:230.82px;font-size:7.3px;color:#8b9cb2">09:15</div>
<div class="t" style="left:753.4px;width:60px;text-align:center;top:230.82px;font-size:7.3px;color:#8b9cb2">09:50</div>
<div class="t" style="left:810.6px;width:60px;text-align:center;top:230.82px;font-size:7.3px;color:#8b9cb2">10:25</div>
<div class="t" style="left:865.4px;width:60px;text-align:center;top:230.82px;font-size:7.3px;color:#8b9cb2">10:55</div>
<div class="t" style="left:922.2px;width:60px;text-align:center;top:230.82px;font-size:7.3px;color:#8b9cb2">11:40</div>
<div class="a" style="left:615.1px;top:325.2px;width:380.70px;height:1.00px;background:#e2e2e2;"></div>
<div class="a" style="left:620px;top:329.8px;width:69.7px;height:21.6px;background:#f5f5f5;border:1px solid #ededed"></div>
<div class="t" style="left:629.2px;top:336px;font-size:8.9px;transform:scaleX(0.9);transform-origin:0 0;color:#5a5a5a">Chart Type</div>
<svg class="a" style="left:674.3px;top:338.0px" width="8.60" height="5.30" viewBox="0 0 8.60 5.30"><path d="M1,1 H7.60 L4.30,4.30Z" fill="#3a3a3a"/></svg>
<svg class="a" style="left:224px;top:324.5px" width="3.5" height="6" viewBox="0 0 3.5 6"><path d="M0.4,3 L3,0.6 V5.4Z" fill="#7a7a7a"/></svg>
<!-- ===== QUICK VIEW ===== -->
<div class="a" style="left:227.00px;top:363.70px;width:771.00px;height:29.00px;background:#5fa2dd;"></div>
<div class="t" style="left:237.9px;top:373px;font-size:10.87px;color:#fff;">Quick View</div>
<svg class="a" style="left:962.20px;top:376.00px" width="9.20" height="5.40" viewBox="0 0 9.20 5.40"><path d="M1,1 H8.20 L4.60,4.40Z" fill="#fff"/></svg>
<svg class="a" style="left:977.5px;top:375.2px" width="8" height="7.4" viewBox="0 0 8 7.4"><path d="M1 0.9 L7 6.5 M7 0.9 L1 6.5" stroke="#fff" stroke-width="2"/></svg>
<div class="a" style="left:227.00px;top:392.70px;width:770.50px;height:209.30px;background:#fff;"></div>
<div class="a" style="left:231.30px;top:398.00px;width:762.20px;height:29.00px;background:#5fa2dd;"></div>
<div class="t" style="left:242px;top:407px;font-size:10.8px;color:#fff;">gs_pi: Streams</div>
<div class="a" style="left:231.30px;top:427.00px;width:762.20px;height:23.00px;background:#fff;border-right:1px solid #e4e4e4"></div>
<div class="a" style="left:231.30px;top:449.60px;width:762.20px;height:1.80px;background:#d6d6d6;"></div>
<div class="a" style="left:558.20px;top:427.00px;width:1.00px;height:22.60px;background:#e4e4e4;"></div>
<div class="a" style="left:775.60px;top:427.00px;width:1.00px;height:22.60px;background:#e4e4e4;"></div>
<div class="t" style="left:238.4px;top:435px;font-size:8.6px;color:#606060;">Name</div>
<div class="t" style="left:565.7px;top:435px;font-size:8.6px;color:#606060;">Value</div>
<div class="t" style="left:783px;top:435px;font-size:8.7px;color:#606060;">Last Updated</div>
<svg class="a" style="left:237.8px;top:458.1px" width="8.4" height="7.6" viewBox="0 0 8.4 7.6"><rect x="0" y="0" width="8.4" height="7.6" rx="1.2" fill="#808080"/><rect x="1.8" y="3.1" width="4.8" height="1.5" fill="#fff"/></svg>
<div class="t" style="left:254.8px;top:459px;font-size:8.65px;color:#6a6a6a;">(5 Streams)</div>
<div class="a" style="left:231.30px;top:472.60px;width:762.20px;height:1.20px;background:#ececec;"></div>
<div class="a" style="left:231.30px;top:495.20px;width:762.20px;height:1.10px;background:#ededed;"></div>
<div class="a" style="left:238px;top:483.10px;width:10.8px;height:3.9px;border-radius:2px;background:linear-gradient(#4a95d3,#1f6aa8)"></div><div class="a" style="left:241.40px;top:484.35px;width:4px;height:1.5px;background:#15416a"></div>
<div class="t" style="left:252px;top:481px;font-size:8.8px;color:#404040;">disk space free</div>
<div class="t" style="left:565.7px;top:481px;font-size:8.7px;color:#404040;">54,854.84</div>
<div class="t" style="left:783px;top:481px;font-size:8.8px;color:#404040;">11:41:24 (26s 245ms ago)</div>
<div class="a" style="left:231.30px;top:495.80px;width:762.20px;height:22.40px;background:#f5f5f5;"></div>
<div class="a" style="left:231.30px;top:517.60px;width:762.20px;height:1.10px;background:#ededed;"></div>
<div class="a" style="left:238px;top:505.50px;width:10.8px;height:3.9px;border-radius:2px;background:linear-gradient(#4a95d3,#1f6aa8)"></div><div class="a" style="left:241.40px;top:506.75px;width:4px;height:1.5px;background:#15416a"></div>
<div class="t" style="left:252px;top:503px;font-size:8.8px;color:#404040;">distance</div>
<div class="t" style="left:565.7px;top:503px;font-size:8.7px;color:#404040;">34.79</div>
<div class="t" style="left:783px;top:503px;font-size:8.8px;color:#404040;">11:41:47 (3s 55ms ago)</div>
<div class="a" style="left:231.30px;top:540.00px;width:762.20px;height:1.10px;background:#ededed;"></div>
<div class="a" style="left:238px;top:527.90px;width:10.8px;height:3.9px;border-radius:2px;background:linear-gradient(#4a95d3,#1f6aa8)"></div><div class="a" style="left:241.40px;top:529.15px;width:4px;height:1.5px;background:#15416a"></div>
<div class="t" style="left:252px;top:526px;font-size:8.8px;color:#404040;">status</div>
<div class="t" style="left:565.7px;top:526px;font-size:8.7px;color:#404040;">1.00</div>
<div class="t" style="left:783px;top:526px;font-size:8.8px;color:#404040;">11:40:26 (1m 24s ago)</div>
<div class="a" style="left:231.30px;top:540.60px;width:762.20px;height:22.40px;background:#f5f5f5;"></div>
<div class="a" style="left:231.30px;top:562.40px;width:762.20px;height:1.10px;background:#ededed;"></div>
<div class="a" style="left:238px;top:550.30px;width:10.8px;height:3.9px;border-radius:2px;background:linear-gradient(#4a95d3,#1f6aa8)"></div><div class="a" style="left:241.40px;top:551.55px;width:4px;height:1.5px;background:#15416a"></div>
<div class="t" style="left:252px;top:548px;font-size:8.8px;color:#404040;">sys load 1m avg</div>
<div class="t" style="left:565.7px;top:548px;font-size:8.7px;color:#404040;">0.35</div>
<div class="t" style="left:783px;top:548px;font-size:8.8px;color:#404040;">11:41:24 (26s 245ms ago)</div>
<div class="a" style="left:231.30px;top:584.80px;width:762.20px;height:1.10px;background:#ededed;"></div>
<div class="a" style="left:238px;top:572.70px;width:10.8px;height:3.9px;border-radius:2px;background:linear-gradient(#4a95d3,#1f6aa8)"></div><div class="a" style="left:241.40px;top:573.95px;width:4px;height:1.5px;background:#15416a"></div>
<div class="t" style="left:252px;top:570px;font-size:8.8px;color:#404040;">used heap memory</div>
<div class="t" style="left:565.7px;top:570px;font-size:8.7px;color:#404040;">6.16</div>
<div class="t" style="left:783px;top:570px;font-size:8.8px;color:#404040;">11:41:24 (26s 245ms ago)</div>
<!-- ===== ANNOTATIONS ===== -->
<svg class="a" style="left:0;top:0" width="1000" height="605" viewBox="0 0 1000 605">
<line x1="141.5" y1="164.6" x2="107.3" y2="171.6" stroke="#ff1010" stroke-width="1.6"/><path d="M100.6,173.0 L109.2,167.6 L107.8,171.5 L110.6,174.6Z" fill="#ff1010"/><circle cx="156.9" cy="163.3" r="11.1" fill="rgba(20,20,215,0.23)" stroke="#ff1010" stroke-width="1.7"/><path d="M154.3,159.7 L157.0,157.7 V167.4 M154.0,167.4 H159.9" fill="none" stroke="#f02828" stroke-width="1.25"/>
<line x1="140.2" y1="215.8" x2="122.9" y2="218.0" stroke="#ff1010" stroke-width="1.6"/><path d="M116.2,218.9 L125.2,214.1 L123.4,218.0 L126.1,221.3Z" fill="#ff1010"/><circle cx="151.7" cy="214.8" r="11.1" fill="rgba(20,20,215,0.23)" stroke="#ff1010" stroke-width="1.7"/><text x="151.8" y="219.0" font-family="Liberation Sans" font-size="15" text-anchor="middle" fill="#f02828">3</text>
<line x1="162.8" y1="394.6" x2="222.9" y2="386.9" stroke="#ff1010" stroke-width="1.6"/><path d="M229.6,386.0 L220.6,390.8 L222.4,386.9 L219.7,383.6Z" fill="#ff1010"/><circle cx="151.3" cy="396.8" r="11.0" fill="rgba(20,20,215,0.23)" stroke="#ff1010" stroke-width="1.7"/><text x="151.4" y="401.0" font-family="Liberation Sans" font-size="15" text-anchor="middle" fill="#f02828">2</text>
<line x1="360.6" y1="71.3" x2="298.4" y2="77.6" stroke="#ff1010" stroke-width="1.6"/><path d="M291.6,78.3 L300.7,73.8 L298.9,77.6 L301.4,80.9Z" fill="#ff1010"/><circle cx="375.4" cy="71.9" r="11.2" fill="rgba(20,20,215,0.23)" stroke="#ff1010" stroke-width="1.7"/><text x="375.5" y="76.1" font-family="Liberation Sans" font-size="15" text-anchor="middle" fill="#f02828">4</text>
</svg>
</body></html>
